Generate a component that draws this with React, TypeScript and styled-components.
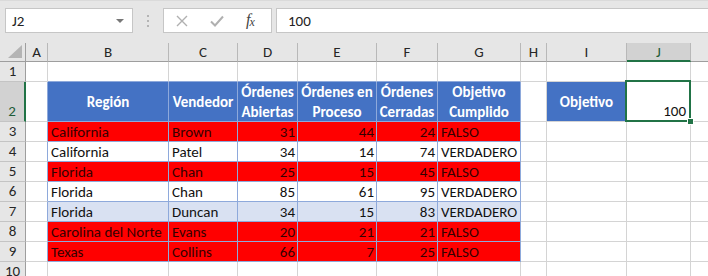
import * as React from 'react';
import styled, { createGlobalStyle, css } from 'styled-components';

const Global = createGlobalStyle`
  html, body { margin: 0; padding: 0; background: #ffffff; overflow: hidden; }
  body { font-family: Carlito, Calibri, Lato, "Liberation Sans", sans-serif; }
`;

const GRID = '#d4d4d4';
const TBL = '#8ea9db';
const BLUE = '#4472c4';
const RED = '#ff0000';
const BAND = '#d9e1f2';
const GREEN = '#217346';

const colWidths = [26, 22, 121, 69, 60, 79, 61, 83, 26, 80, 64, 40];
const letters = ['A', 'B', 'C', 'D', 'E', 'F', 'G', 'H', 'I', 'J', ''];

const Page = styled.div`
  width: 708px;
  height: 276px;
  overflow: hidden;
  background: #e6e6e6;
`;

const Toolbar = styled.div`
  height: 43px;
  box-sizing: border-box;
  padding: 7px 0 0 5px;
  display: flex;
  align-items: flex-start;
  border-top: 1px solid #dadada;
`;

const Box = styled.div<{ w?: number }>`
  height: 25px;
  box-sizing: border-box;
  background: #ffffff;
  border: 1px solid #c6c6c6;
  display: flex;
  align-items: center;
  ${(p) => (p.w ? css`width: ${p.w}px;` : css`flex: 1; border-right: none;`)}
`;

const NameText = styled.span`
  flex: 1;
  padding-left: 6px;
  font-size: 15px;
  color: #222;
`;

const Arrow = styled.span`
  width: 0;
  height: 0;
  border-left: 4px solid transparent;
  border-right: 4px solid transparent;
  border-top: 4px solid #777;
  margin-right: 8px;
`;

const Dots = styled.div`
  width: 30px;
  height: 25px;
  display: flex;
  flex-direction: column;
  align-items: center;
  justify-content: center;
  gap: 3px;
  & > i {
    width: 2px;
    height: 2px;
    background: #b4b4b4;
  }
`;

const FxBox = styled(Box)`
  margin-right: 4px;
  gap: 22px;
  padding-left: 12px;
`;

const Fx = styled.span`
  font-family: "Liberation Serif", serif;
  font-style: italic;
  font-size: 16px;
  color: #444;
  letter-spacing: -1px;
  & > sub { font-size: 12px; vertical-align: -1px; }
`;

const FormulaText = styled.span`
  padding-left: 11px;
  font-size: 15px;
  color: #222;
`;

const Sheet = styled.div`
  display: grid;
  grid-template-columns: ${colWidths.map((w) => `${w}px`).join(' ')};
  grid-template-rows: 19px 20px 40px repeat(8, 20px);
  background: #ffffff;
`;

const ColHead = styled.div<{ sel?: boolean }>`
  box-sizing: border-box;
  background: ${(p) => (p.sel ? '#d2d2d2' : '#e6e6e6')};
  border-right: 1px solid #b8b8b8;
  border-bottom: ${(p) => (p.sel ? `2px solid ${GREEN}` : '1px solid #9e9e9e')};
  display: flex;
  align-items: center;
  justify-content: center;
  font-size: 15px;
  color: ${(p) => (p.sel ? '#1e5c38' : '#262626')};
`;

const Corner = styled(ColHead)`
  position: relative;
  border-right: 1px solid #9e9e9e;
  & > svg { position: absolute; right: 3px; bottom: 3px; }
`;

const RowHead = styled.div<{ sel?: boolean; tall?: boolean }>`
  box-sizing: border-box;
  background: ${(p) => (p.sel ? '#d2d2d2' : '#e6e6e6')};
  border-right: ${(p) => (p.sel ? `2px solid ${GREEN}` : '1px solid #9e9e9e')};
  border-bottom: 1px solid #c4c4c4;
  display: flex;
  align-items: ${(p) => (p.tall ? 'flex-end' : 'center')};
  justify-content: center;
  font-size: 15px;
  line-height: 19px;
  color: ${(p) => (p.sel ? '#1e5c38' : '#262626')};
`;

type CellKind = 'plain' | 'head' | 'red' | 'white' | 'band';

const fills: Record<CellKind, string> = {
  plain: '#ffffff',
  head: BLUE,
  red: RED,
  white: '#ffffff',
  band: BAND,
};

const Cell = styled.div<{ kind: CellKind; right?: boolean; edgeR?: boolean; edgeB?: boolean }>`
  position: relative;
  box-sizing: border-box;
  background: ${(p) => fills[p.kind]};
  border-right: 1px solid ${(p) => (p.kind !== 'plain' || p.edgeR ? TBL : GRID)};
  border-bottom: 1px solid ${(p) => (p.kind !== 'plain' || p.edgeB ? TBL : GRID)};
  display: flex;
  align-items: center;
  padding: 0 2px 0 3px;
  font-size: 15px;
  white-space: nowrap;
  overflow: visible;
  color: ${(p) => (p.kind === 'red' ? '#350000' : '#111')};
  justify-content: ${(p) => (p.right ? 'flex-end' : 'flex-start')};
  ${(p) =>
    p.kind === 'head' &&
    css`
      justify-content: center;
      text-align: center;
      white-space: normal;
      line-height: 20px;
      font-weight: bold;
      color: #ffffff;
      padding: 0;
    `}
`;

const Target = styled(Cell)`
  border-right-color: ${GRID};
  border-bottom-color: ${GRID};
`;

const Selected = styled(Cell)`
  align-items: flex-end;
  padding-bottom: 1px;
  padding-right: 4px;
  &::after {
    content: '';
    position: absolute;
    left: -2px;
    top: -2px;
    width: 66px;
    height: 42px;
    box-sizing: border-box;
    border: 2px solid ${GREEN};
    z-index: 2;
  }
  &::before {
    content: '';
    position: absolute;
    right: -4px;
    bottom: -4px;
    width: 5px;
    height: 5px;
    background: ${GREEN};
    border: 1px solid #fff;
    z-index: 3;
  }
`;

type Row = { kind: CellKind; region: string; seller: string; a: number; b: number; c: number; ok: string };

const rows: Row[] = [
  { kind: 'red', region: 'California', seller: 'Brown', a: 31, b: 44, c: 24, ok: 'FALSO' },
  { kind: 'white', region: 'California', seller: 'Patel', a: 34, b: 14, c: 74, ok: 'VERDADERO' },
  { kind: 'red', region: 'Florida', seller: 'Chan', a: 25, b: 15, c: 45, ok: 'FALSO' },
  { kind: 'white', region: 'Florida', seller: 'Chan', a: 85, b: 61, c: 95, ok: 'VERDADERO' },
  { kind: 'band', region: 'Florida', seller: 'Duncan', a: 34, b: 15, c: 83, ok: 'VERDADERO' },
  { kind: 'red', region: 'Carolina del Norte', seller: 'Evans', a: 20, b: 21, c: 21, ok: 'FALSO' },
  { kind: 'red', region: 'Texas', seller: 'Collins', a: 66, b: 7, c: 25, ok: 'FALSO' },
];

const headers = ['Región', 'Vendedor', 'Órdenes Abiertas', 'Órdenes en Proceso', 'Órdenes Cerradas', 'Objetivo Cumplido'];

const Blank = ({ edgeR, edgeB }: { edgeR?: boolean; edgeB?: boolean }) => (
  <Cell kind="plain" edgeR={edgeR} edgeB={edgeB} />
);

export default function App() {
  return (
    <Page>
      <Global />
      <Toolbar>
        <Box w={128}>
          <NameText>J2</NameText>
          <Arrow />
        </Box>
        <Dots>
          <i />
          <i />
          <i />
        </Dots>
        <FxBox w={109}>
          <svg width="12" height="12" viewBox="0 0 12 12">
            <path d="M1 1 L11 11 M11 1 L1 11" stroke="#b0b0b0" strokeWidth="1.4" fill="none" />
          </svg>
          <svg width="14" height="12" viewBox="0 0 14 12">
            <path d="M1 6.5 L5 10.5 L13 1.5" stroke="#b0b0b0" strokeWidth="2" fill="none" />
          </svg>
          <Fx>
            f<sub>x</sub>
          </Fx>
        </FxBox>
        <Box>
          <FormulaText>100</FormulaText>
        </Box>
      </Toolbar>
      <Sheet>
        <Corner>
          <svg width="14" height="13" viewBox="0 0 14 13">
            <path d="M14 0 L14 13 L0 13 Z" fill="#b4b4b4" />
          </svg>
        </Corner>
        {letters.map((l, i) => (
          <ColHead key={i} sel={l === 'J'}>
            {l}
          </ColHead>
        ))}

        {/* row 1 */}
        <RowHead>1</RowHead>
        <Blank />
        {[0, 1, 2, 3, 4, 5].map((i) => (
          <Blank key={i} edgeB />
        ))}
        <Blank />
        <Blank />
        <Blank />
        <Blank />

        {/* row 2 */}
        <RowHead sel tall>
          2
        </RowHead>
        <Blank edgeR />
        {headers.map((h) => (
          <Cell key={h} kind="head">
            {h}
          </Cell>
        ))}
        <Blank />
        <Target kind="head">Objetivo</Target>
        <Selected kind="plain" right>
          100
        </Selected>
        <Blank />

        {rows.map((r, i) => (
          <React.Fragment key={i}>
            <RowHead>{i + 3}</RowHead>
            <Blank edgeR />
            <Cell kind={r.kind}>{r.region}</Cell>
            <Cell kind={r.kind}>{r.seller}</Cell>
            <Cell kind={r.kind} right>
              {r.a}
            </Cell>
            <Cell kind={r.kind} right>
              {r.b}
            </Cell>
            <Cell kind={r.kind} right>
              {r.c}
            </Cell>
            <Cell kind={r.kind}>{r.ok}</Cell>
            <Blank />
            <Blank />
            <Blank />
            <Blank />
          </React.Fragment>
        ))}

        {/* row 10 */}
        <RowHead>10</RowHead>
        {Array.from({ length: 11 }).map((_, i) => (
          <Blank key={i} />
        ))}
      </Sheet>
    </Page>
  );
}
